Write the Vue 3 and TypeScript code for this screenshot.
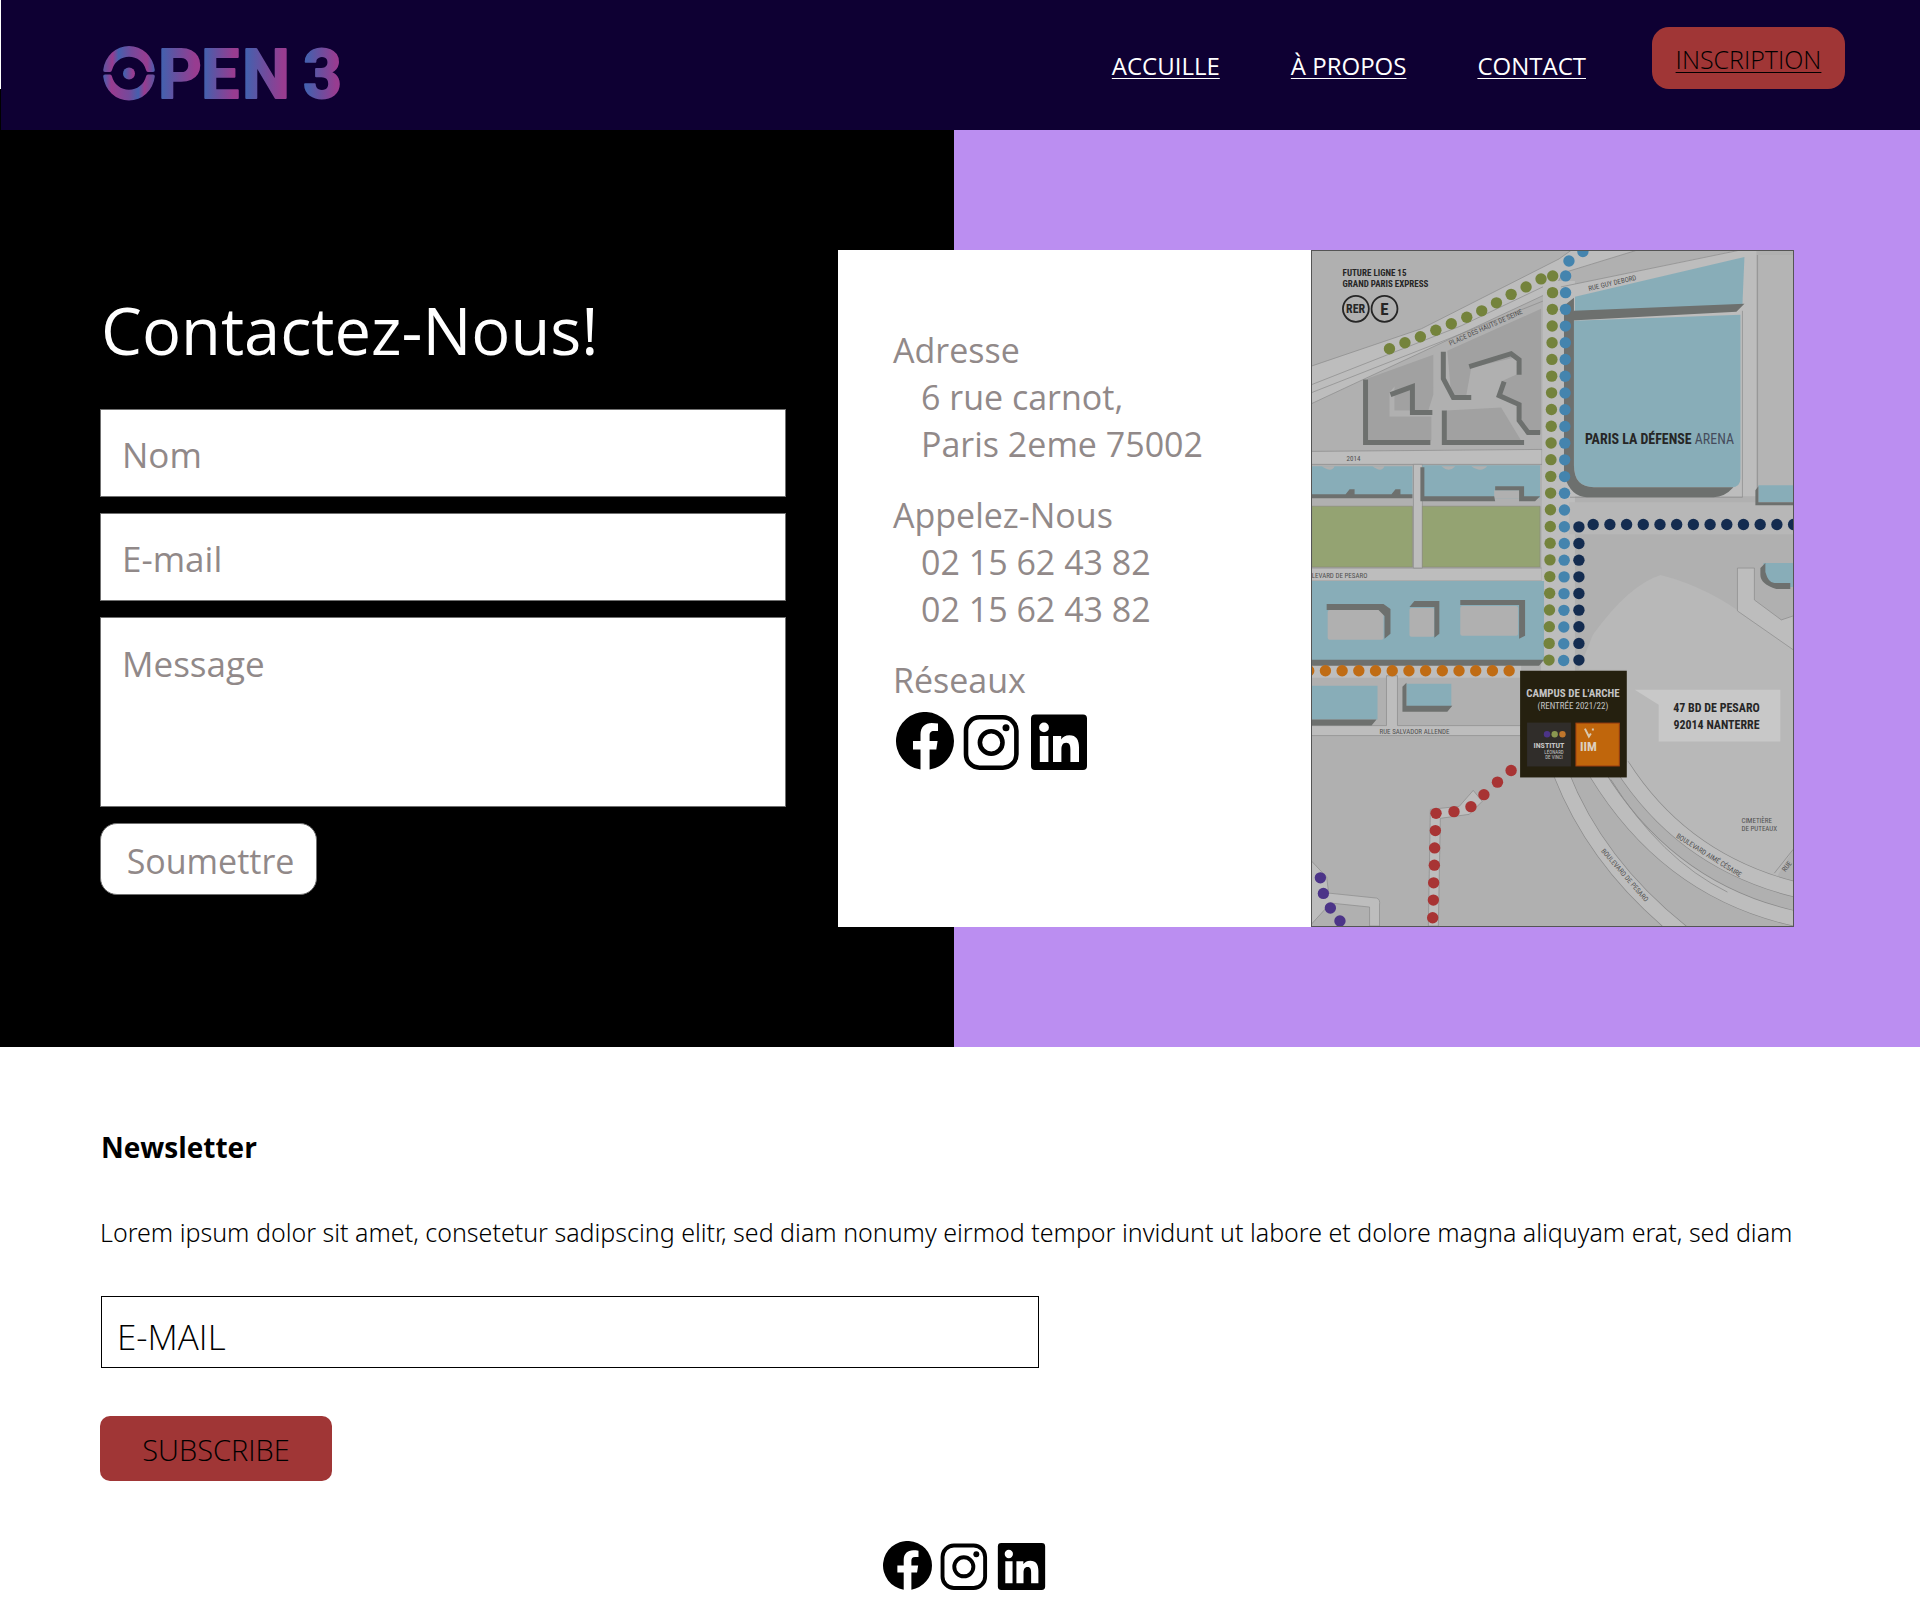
<script setup lang="ts">
import { ref } from 'vue'

interface Dot {
  x: number
  y: number
}

const nom = ref('')
const email = ref('')
const message = ref('')
const newsletterEmail = ref('')

const links = [
  { label: 'ACCUILLE', href: '#accueil' },
  { label: 'À PROPOS', href: '#a-propos' },
  { label: 'CONTACT', href: '#contact' },
]

// Evenly spaced dots between two points of the map
function line(x1: number, y1: number, x2: number, y2: number, count: number): Dot[] {
  return Array.from({ length: count }, (_, i) => ({
    x: x1 + ((x2 - x1) * i) / (count - 1),
    y: y1 + ((y2 - y1) * i) / (count - 1),
  }))
}

function points(...pairs: [number, number][]): Dot[] {
  return pairs.map(([x, y]) => ({ x, y }))
}

const routes: { color: string; dots: Dot[] }[] = [
  {
    color: '#74833c',
    dots: [
      ...line(241.7, 25, 238, 410.3, 24),
      ...points([230, 28], [215, 36], [200, 43.5], [185.3, 52], [170.5, 60], [155.5, 66.5], [140, 73], [124.5, 79.5], [109, 86], [93.5, 92], [78, 98]),
    ],
  },
  { color: '#4484ae', dots: [...line(254.7, 25, 252.7, 410.7, 24), ...points([258, 10], [272, 0.5])] },
  { color: '#142c50', dots: [...line(268, 276.7, 268, 410.3, 9), ...line(282.3, 274.3, 483.3, 274.3, 13)] },
  { color: '#c06c14', dots: line(-3, 421, 198, 421, 13) },
  {
    color: '#a83434',
    dots: points([200, 521], [186.3, 532.7], [172.7, 545.3], [159.7, 557.3], [142.7, 562.3], [124.7, 564], [124, 581.3], [123.3, 598.7], [123, 616], [122.3, 633.7], [122, 651], [121.3, 668.7]),
  },
  { color: '#4c3488', dots: points([8.7, 628.7], [11.7, 644.3], [18.7, 659], [28.3, 672]) },
]

const networks = [
  { name: 'Facebook', id: 'facebook' },
  { name: 'Instagram', id: 'instagram' },
  { name: 'LinkedIn', id: 'linkedin' },
]
</script>

<template>
  <div class="page">
    <svg class="sprite" width="0" height="0" aria-hidden="true">
      <symbol id="facebook" viewBox="0 0 58 58">
        <path
          d="M58 29A29 29 0 1 0 24.5 57.6V37.4H17V29h7.5v-6.4C24.5 15 29 11 35.8 11c2.2 0 4.2.2 6.2.5V19h-4c-3.3 0-4.4 2-4.4 4.2V29h8l-1.3 8.4h-6.7v20.2A29 29 0 0 0 58 29z"
        />
      </symbol>
      <symbol id="instagram" viewBox="0 0 58 58">
        <rect x="3" y="5.3" width="50.4" height="50.4" rx="13.5" fill="none" stroke="currentColor" stroke-width="4.6" />
        <circle cx="28.2" cy="30.5" r="11.3" fill="none" stroke="currentColor" stroke-width="4.6" />
        <circle cx="43" cy="15.7" r="3.5" />
      </symbol>
      <symbol id="linkedin" viewBox="0 0 58 58">
        <path
          fill-rule="evenodd"
          d="M5 2.5h48a4 4 0 0 1 4 4V54a4 4 0 0 1-4 4H5a4 4 0 0 1-4-4V6.5a4 4 0 0 1 4-4zM14 10.5a4.9 4.9 0 1 0 0 9.8 4.9 4.9 0 0 0 0-9.8zM9.8 24v26h8.6V24zM23 24v26h8.4V37.5c0-4 1.2-6.8 4.8-6.8s4.2 3 4.2 6.8V50H49V35.5c0-7.5-2.6-12.2-9.6-12.2-4 0-6.8 1.7-8.2 4.3V24z"
        />
      </symbol>
    </svg>

    <header class="header">
      <div class="bar">
        <a class="logo" href="#accueil" aria-label="Open 3">
          <svg viewBox="0 0 240 58" width="240" height="58">
            <defs>
              <linearGradient id="ink" x1="0" x2="1" y1="0" y2="0">
                <stop offset="0.1" stop-color="#4560ae" />
                <stop offset="0.45" stop-color="#6c4e9e" />
                <stop offset="0.85" stop-color="#983c90" />
              </linearGradient>
              <linearGradient id="arc-top" x1="0" x2="1" y1="0" y2="0">
                <stop offset="0" stop-color="#5a559f" />
                <stop offset="0.18" stop-color="#983c90" />
                <stop offset="0.3" stop-color="#4560ae" />
                <stop offset="0.55" stop-color="#75499b" />
                <stop offset="0.85" stop-color="#983c90" />
                <stop offset="1" stop-color="#4560ae" />
              </linearGradient>
              <linearGradient id="arc-bottom" x1="0" x2="1" y1="0" y2="0">
                <stop offset="0" stop-color="#4560ae" />
                <stop offset="0.16" stop-color="#983c90" />
                <stop offset="0.5" stop-color="#75499b" />
                <stop offset="0.68" stop-color="#4560ae" />
                <stop offset="0.8" stop-color="#983c90" />
                <stop offset="1" stop-color="#5a559f" />
              </linearGradient>
            </defs>
            <path d="M0.2 25A26 27.5 0 0 1 51.8 25Q52 27 50 27H45Q43.5 27 43 25A17.5 17.5 0 0 0 9 25Q8.5 27 7 27H2Q0 27 0.2 25z" fill="url(#arc-top)" />
            <path d="M0.2 31.5A26 27.5 0 0 0 51.8 31.5Q52 29.5 50 29.5H45Q43.5 29.5 43 31.5A17.5 17.5 0 0 1 9 31.5Q8.5 29.5 7 29.5H2Q0 29.5 0.2 31.5z" fill="url(#arc-bottom)" />
            <circle cx="26" cy="28.5" r="6" fill="url(#ink)" />
            <g class="wordmark">
              <text x="55" y="53">P</text>
              <text x="98" y="53">E</text>
              <text x="139" y="53">N</text>
              <text x="200" y="53">3</text>
            </g>
          </svg>
        </a>
        <nav class="nav">
          <a v-for="link in links" :key="link.label" :href="link.href">{{ link.label }}</a>
        </nav>
        <a class="signup" href="#inscription">INSCRIPTION</a>
      </div>
    </header>

    <main>
      <section id="contact" class="hero">
        <form class="form" @submit.prevent>
          <h1>Contactez-Nous!</h1>
          <label for="nom"><input id="nom" v-model="nom" type="text" aria-label="Nom" placeholder="Nom" /></label>
          <label for="email"><input id="email" v-model="email" type="email" aria-label="E-mail" placeholder="E-mail" /></label>
          <label for="message"><textarea id="message" v-model="message" aria-label="Message" placeholder="Message"></textarea></label>
          <button type="submit">Soumettre</button>
        </form>

        <div class="card">
          <div class="details">
            <div class="block">
              <h2>Adresse</h2>
              <p>6 rue carnot,</p>
              <p>Paris 2eme 75002</p>
            </div>
            <div class="block">
              <h2>Appelez-Nous</h2>
              <p>02 15 62 43 82</p>
              <p>02 15 62 43 82</p>
            </div>
            <div class="block">
              <h2>Réseaux</h2>
              <div class="social">
                <a v-for="n in networks" :key="n.id" href="#reseaux" :aria-label="n.name">
                  <svg><use :href="'#' + n.id" /></svg>
                </a>
              </div>
            </div>
          </div>

          <svg class="map" viewBox="0 0 483 677" preserveAspectRatio="xMidYMid slice" role="img" aria-label="Plan d'accès">
            <rect width="483" height="677" fill="#b0b0b0" />
            <!-- open ground around the campus -->
            <path d="M268 420L282 385Q318 335 350 325Q400 338 440 370L483 398V600L464 632Q400 625 360 580L316 520V420z" fill="#b8b8b8" />
            <rect x="448" y="4" width="35" height="232" fill="#b4b4b4" />
            <!-- streets -->
            <g fill="#bdbdbd" stroke="#8b8b8b" stroke-width="0.7">
              <path d="M-2 116L110 78L248 8L262 -2H330L252 22L242 40L0 153z" />
              <path d="M0 134L150 75L236 34M0 142L140 87L240 47" fill="none" />
              <path d="M-2 201L231 199V214H-2z" />
              <path d="M-2 318H231V331H-2z" />
              <path d="M102 214H111V318H102z" />
              <path d="M232 30H264V424H230z" stroke="none" />
              <path d="M250 36L433 -2H446V246H250z" stroke="none" />
              <path d="M250 36L435 -2M447 4V254M259 247H432V60" fill="none" />
              <path d="M258 252H483V284H258z" fill="#b7b7b7" stroke="none" />
              <path d="M-2 428H210V412H-2z" stroke="none" />
              <path d="M-2 476H75V426H86V476H210V486H-2z" />
              <path d="M117 677L119 560L148 557L162 541L171 552L158 565L129 569L127 677z" />
              <path d="M-2 610L15 628L17 644L65 649Q69 650 68 656V677H58V658L19 654L-2 677" />
              <path d="M427 318V361L483 400V366L471 370L444 350V318z" />
            </g>
            <!-- boulevards -->
            <g fill="none">
              <g stroke="#8b8b8b" stroke-width="16">
                <path d="M250 524Q286 616 372 684" />
                <path d="M286 524Q360 645 492 671" />
                <path d="M311 516Q374 615 492 642" />
              </g>
              <g stroke="#bdbdbd" stroke-width="14.6">
                <path d="M250 524Q286 616 372 684" />
                <path d="M286 524Q360 645 492 671" />
                <path d="M311 516Q374 615 492 642" />
              </g>
              <path d="M300 530Q350 610 417 643M483 600L464 624" stroke="#8b8b8b" stroke-width="0.8" />
            </g>
            <!-- grey blocks, top left -->
            <g fill="#a1a1a1">
              <path d="M56 128L122 104V144L117 160H83V136L78 142V166H120V190H56z" />
              <path d="M136 100L230 58V184L213 178L206 152L190 144L192 130L207 123V106L160 117L155 145H140z" />
              <path d="M135 160L190 157L210 190H135z" />
            </g>
            <g fill="none" stroke="#6d706e" stroke-width="5">
              <path d="M54 129V192H119" />
              <path d="M79 144L101 136V162H121" />
              <path d="M132 101V128L142 147H160" />
              <path d="M133 160V192H213" />
              <path d="M158 116L200 103L208 109V124" />
              <path d="M193 131L188 145L208 154V170L217 182H229" />
            </g>
            <!-- fields -->
            <path d="M0 256H101V317H0zM111 256H229V317H111z" fill="#94a372" stroke="#8a8a7a" stroke-width="0.6" />
            <!-- blue buildings -->
            <g fill="#88adb8">
              <path d="M0 216H101V245H0zM111 215H229V248H111z" />
              <path d="M0 331H233V411H0z" />
              <path d="M0 436H66V470H0zM95 434H140V457H95z" />
              <path d="M264 46L434 6L432 54L264 62z" />
              <path d="M263 70L430 64V228Q430 237 421 237H283Q263 237 263 215z" />
              <path d="M448 235H483V252H448zM453 313H483V337H461Q453 330 453 322z" />
            </g>
            <path d="M183 240H209V248H183z" fill="#b0b0b0" />
            <g fill="#6d706e">
              <path d="M0 244H34L38 239H43V244H80L84 239H89V244H101V248H0z" />
              <path d="M109 217H113V246H183L184 251H109zM184 236H213V246H229L224 251H208V240H184z" />
              <path d="M0 410H233L228 416H0zM0 470H65L60 476H0z" />
              <path d="M91 437L95 433V456H141L136 462H91z" />
              <path d="M263 60L434 53L426 61L256 70z" />
              <path d="M253 55L263 47V215Q263 237 283 237H423Q414 247 403 247H276Q260 247 253 225z" />
              <path d="M445 240L448 236V252H483V255H445zM450 318L455 313V322Q458 333 464 333H480V339H466Q450 334 450 325z" />
            </g>
            <g fill="#b0b0b0">
              <rect x="16" y="360" width="56" height="30" rx="2" />
              <rect x="98" y="358" width="25" height="29" rx="2" />
              <rect x="149" y="356" width="58" height="30" rx="2" />
              <path d="M10 216H23Q20 223 10 216zM61 216H73Q70 223 61 216zM130 216H144Q138 223 130 216zM160 216H176Q170 223 160 216z" />
            </g>
            <g fill="#6d706e">
              <path d="M15 354H72L79 359V384L73 389V366L67 360H15z" />
              <path d="M98 357L103 351H128V384L123 388V357z" />
              <path d="M149 350H214V386L208 389V355H149z" />
            </g>
            <!-- address callout -->
            <path d="M324 440H470V492H348V455z" fill="#c8c8c8" />

            <g v-for="route in routes" :key="route.color" :fill="route.color">
              <circle v-for="(dot, i) in route.dots" :key="i" :cx="dot.x" :cy="dot.y" r="5.7" />
            </g>

            <!-- campus sign -->
            <rect x="209" y="421" width="107" height="107" fill="#25200f" />
            <rect x="216" y="473" width="44" height="44" fill="#302d2a" />
            <rect x="265" y="473.5" width="43.5" height="43" fill="#c0660c" stroke="#a04010" />
            <circle cx="236" cy="484.7" r="3.2" fill="#4c3488" />
            <circle cx="243.7" cy="484.7" r="3.2" fill="#8a9850" />
            <circle cx="251.5" cy="484.7" r="3.2" fill="#c0762c" />
            <path d="M274 479L278 487L280 484M282 479V481" fill="none" stroke="#d8c8b0" stroke-width="2" />

            <g fill="none" stroke="#262626" stroke-width="1.8">
              <circle cx="44.3" cy="58" r="13" />
              <circle cx="73" cy="58" r="13" />
            </g>
            <g class="map-text">
              <g font-weight="bold" fill="#262626">
                <text x="31" y="25" font-size="9">FUTURE LIGNE 15</text>
                <text x="31" y="36" font-size="9">GRAND PARIS EXPRESS</text>
                <text x="44" y="62" font-size="12" text-anchor="middle">RER</text>
                <text x="73" y="64" font-size="17" text-anchor="middle">E</text>
                <text x="274" y="194" font-size="14">PARIS LA DÉFENSE <tspan font-weight="normal" fill="#454c5c">ARENA</tspan></text>
                <text x="406" y="462" font-size="12" text-anchor="middle">47 BD DE PESARO</text>
                <text x="406" y="479" font-size="12" text-anchor="middle">92014 NANTERRE</text>
              </g>
              <g text-anchor="middle" fill="#c4c4c4">
                <text x="262" y="447" font-size="11" font-weight="bold">CAMPUS DE L'ARCHE</text>
                <text x="262" y="459" font-size="9">(RENTRÉE 2021/22)</text>
                <text x="238" y="498" font-size="8" font-weight="bold">INSTITUT</text>
                <text x="243" y="504" font-size="5">LÉONARD</text>
                <text x="243" y="510" font-size="5">DE VINCI</text>
              </g>
              <text x="269" y="501" font-size="13" font-weight="bold" fill="#ddd0c0">IIM</text>
              <g fill="#505050" font-size="7">
                <text x="35" y="211">2014</text>
                <text x="0" y="328">LEVARD DE PESARO</text>
                <text x="68" y="484">RUE SALVADOR ALLENDE</text>
                <text x="431" y="574">CIMETIÈRE</text>
                <text x="431" y="582">DE PUTEAUX</text>
                <text transform="translate(139 95) rotate(-24)">PLACE DES HAUTS DE SEINE</text>
                <text transform="translate(278 40) rotate(-13)">RUE GUY DEBORD</text>
                <text transform="translate(290 602) rotate(49)">BOULEVARD DE PESARO</text>
                <text transform="translate(365 588) rotate(32)">BOULEVARD AIMÉ CÉSAIRE</text>
                <text transform="translate(475 623) rotate(-52)">RUE</text>
              </g>
            </g>
          </svg>
        </div>
      </section>

      <section class="newsletter">
        <h2>Newsletter</h2>
        <p>
          Lorem ipsum dolor sit amet, consetetur sadipscing elitr, sed diam nonumy eirmod tempor invidunt ut labore et
          dolore magna aliquyam erat, sed diam
        </p>
        <form @submit.prevent>
          <label for="newsletter-email">
            <input id="newsletter-email" v-model="newsletterEmail" type="email" aria-label="E-mail" placeholder="E-MAIL" />
          </label>
          <button type="submit">SUBSCRIBE</button>
        </form>
        <div class="social small">
          <a v-for="n in networks" :key="n.id" href="#reseaux" :aria-label="n.name">
            <svg><use :href="'#' + n.id" /></svg>
          </a>
        </div>
      </section>
    </main>
  </div>
</template>

<style>
body {
  margin: 0;
  background: #fff;
}
</style>

<style scoped>
.page {
  font-family: 'Open Sans', 'Noto Sans', sans-serif;
  color: #000;
}

.page * {
  box-sizing: border-box;
}

h1,
h2,
p {
  margin: 0;
  font-weight: 400;
}

label,
input,
textarea,
button {
  display: block;
  font: inherit;
  margin: 0;
}

.sprite {
  position: absolute;
}

.header {
  padding-left: 1px;
  background: linear-gradient(#fff 89px, #000 89px);
}

.bar {
  display: flex;
  align-items: center;
  height: 130px;
  padding: 0 75px 0 102px;
  background: #0e0033;
}

.logo {
  display: flex;
  margin-top: 18px;
}

.logo svg {
  overflow: visible;
}

.wordmark {
  font-family: Roboto, sans-serif;
  font-size: 68px;
  font-weight: 700;
  fill: url(#ink);
  stroke: url(#ink);
  stroke-width: 2px;
  stroke-linejoin: round;
}

.nav {
  display: flex;
  gap: 71px;
  margin-left: auto;
  margin-right: 66px;
}

.nav a,
.signup {
  font-size: 24px;
  text-decoration-thickness: 1px;
  text-underline-offset: 3px;
}

.nav a {
  color: #fff;
}

.signup {
  align-self: flex-start;
  display: flex;
  align-items: center;
  justify-content: center;
  width: 193px;
  height: 62px;
  margin-top: 27px;
  padding-top: 2px;
  border-radius: 17px;
  background: #a03636;
  color: #000;
  font-size: 25px;
  font-weight: 300;
}

.hero {
  display: grid;
  grid-template-columns: 686fr 956fr;
  gap: 52px;
  padding: 120px 126px 120px 100px;
  background: linear-gradient(90deg, #000 49.69%, #bb8ef1 49.69%);
}

.form {
  display: flex;
  flex-direction: column;
  gap: 16px;
  padding-top: 36px;
}

.form h1 {
  margin-bottom: 19px;
  padding-left: 1px;
  color: #fff;
  font-size: 65px;
  line-height: 88px;
}

.form input,
.form textarea,
.form button {
  border: 1px solid #707070;
  background: #fff;
  color: #918989;
  font-size: 35px;
  line-height: 47px;
}

.form input,
.form textarea {
  width: 100%;
  padding: 2px 21px 0;
  border-radius: 0;
  outline: none;
}

.form input {
  height: 88px;
}

.form textarea {
  height: 190px;
  padding-top: 22px;
  resize: none;
}

.form ::placeholder {
  color: #918989;
  opacity: 1;
}

.form button {
  width: 217px;
  height: 72px;
  padding: 4px 0 0 4px;
  border-radius: 17px;
  font-size: 34px;
}

.card {
  display: grid;
  grid-template-columns: 473fr 483fr;
  background: #fff;
}

.details {
  display: flex;
  flex-direction: column;
  gap: 24px;
  padding: 77px 20px 0 55px;
  color: #918989;
}

.details h2,
.details p {
  font-size: 34px;
  line-height: 47px;
}

.details p {
  padding-left: 28px;
}

.map {
  display: block;
  width: 100%;
  height: 677px;
  border: 1px solid #555;
}

.map-text {
  font-family: 'Liberation Sans Narrow', 'Roboto Condensed', 'Open Sans Condensed', 'Liberation Sans', sans-serif;
}

.social {
  display: flex;
  gap: 9px;
  padding: 8px 0 0 3px;
}

.social a {
  display: flex;
  color: #000;
}

.social svg {
  width: 58px;
  height: 58px;
  fill: currentColor;
}

.newsletter {
  padding: 81px 92px 27px 100px;
}

.newsletter h2 {
  padding-left: 1px;
  font-size: 28px;
  font-weight: 700;
  line-height: 38px;
}

.newsletter p {
  margin: 49px 0 47px;
  font-family: 'Noto Sans', 'Open Sans', sans-serif;
  font-size: 25px;
  font-weight: 300;
  line-height: 34px;
}

.newsletter input {
  width: 54.3%;
  height: 72px;
  margin-left: 1px;
  padding: 8px 15px 0;
  border: 1px solid #000;
  border-radius: 0;
  background: #fff;
  color: #000;
  font-size: 35px;
  font-weight: 300;
  outline: none;
}

.newsletter input::placeholder {
  color: #000;
  opacity: 1;
}

.newsletter button {
  width: 232px;
  height: 65px;
  margin-top: 48px;
  padding: 2px 0 0;
  border: 0;
  border-radius: 10px;
  background: #a03636;
  color: #000;
  font-size: 29px;
  font-weight: 300;
}

.social.small {
  justify-content: center;
  gap: 8px;
  padding: 60px 0 0;
}

.social.small svg {
  width: 49px;
  height: 49px;
}
</style>
